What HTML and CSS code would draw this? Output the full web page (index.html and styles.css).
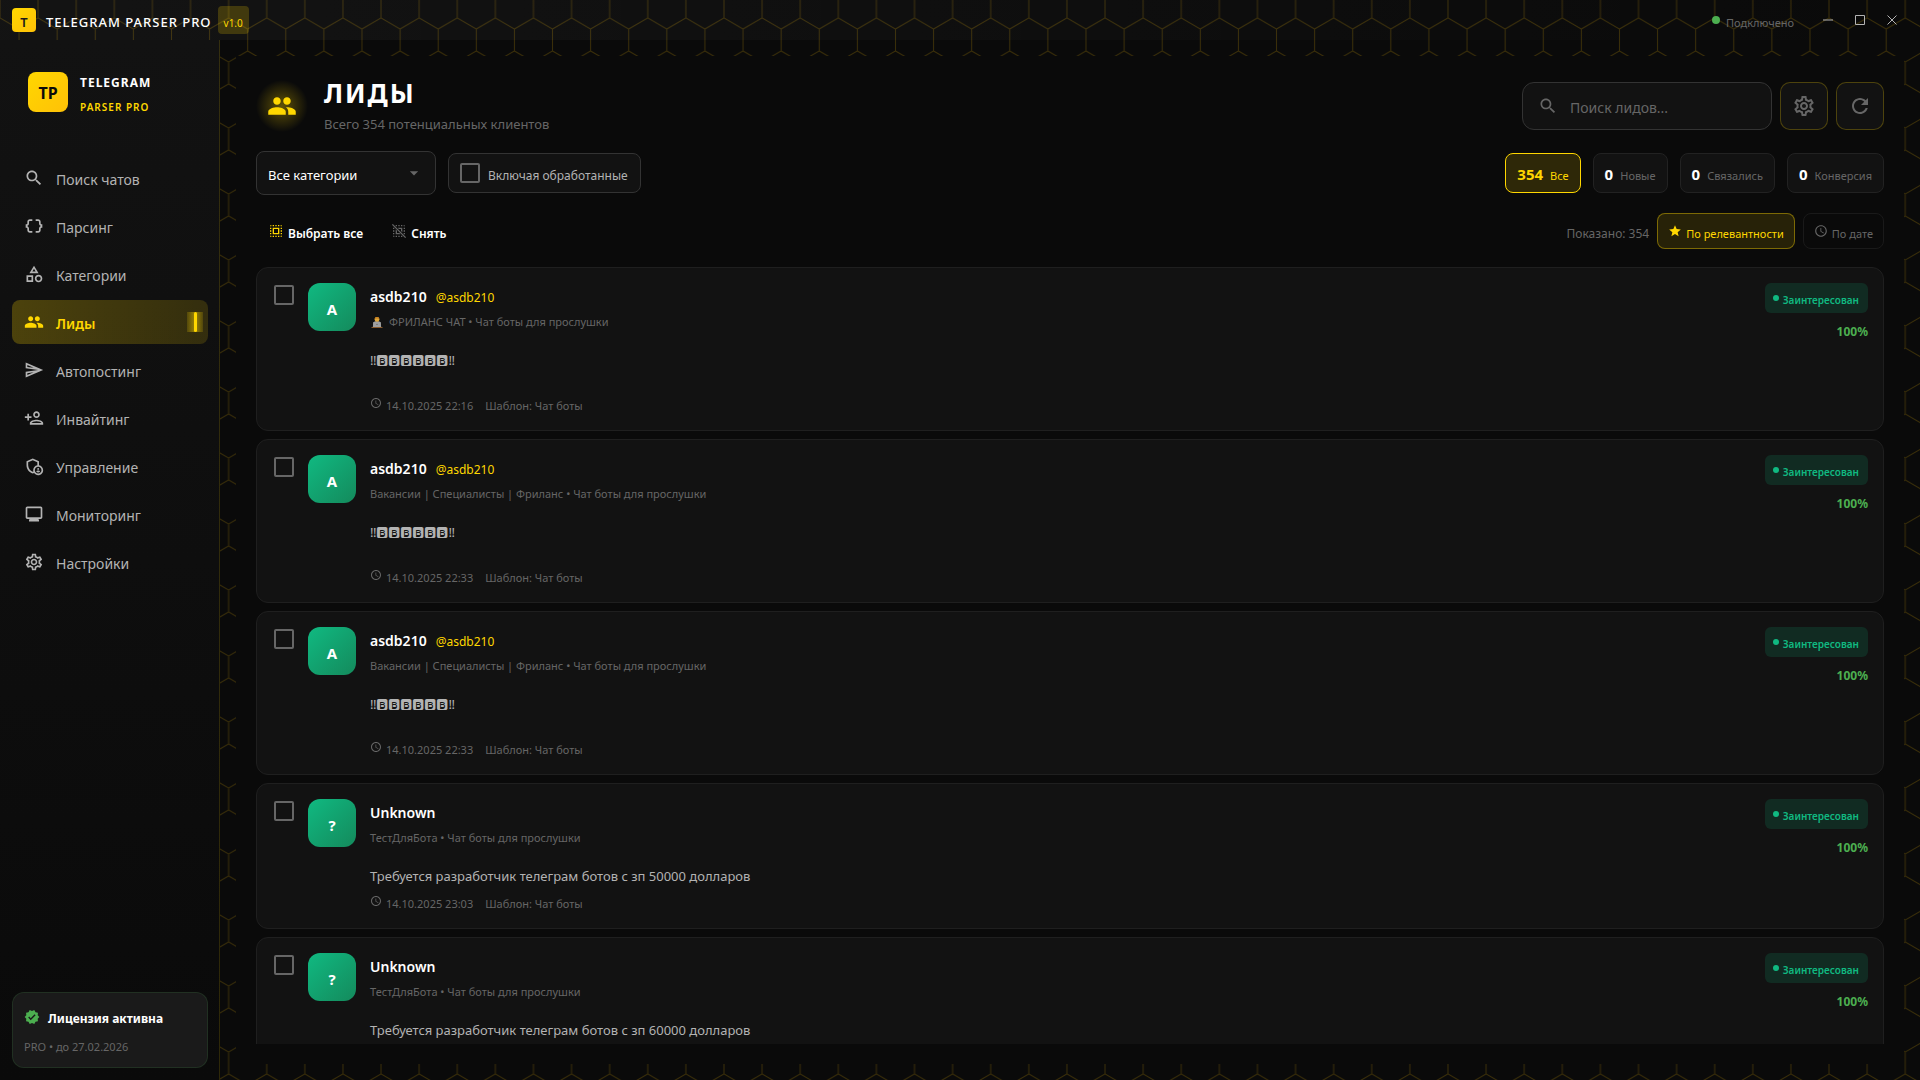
FILE: index.html
```html
<!DOCTYPE html>
<html lang="ru">
<head>
    <meta charset="UTF-8">
    <meta name="viewport" content="width=device-width, initial-scale=1.0">
    <title>Telegram Parser Pro</title>
    <link rel="stylesheet" href="styles.css">
</head>
<body>
    <!-- icons -->
    <svg class="sprite" aria-hidden="true">
        <symbol id="i-search" viewBox="0 0 24 24"><path d="M15.5 14h-.79l-.28-.27C15.41 12.59 16 11.11 16 9.5 16 5.91 13.09 3 9.5 3S3 5.91 3 9.5 5.91 16 9.5 16c1.61 0 3.09-.59 4.23-1.57l.27.28v.79l5 4.99L20.49 19l-4.99-5zm-6 0C7.01 14 5 11.99 5 9.5S7.01 5 9.5 5 14 7.01 14 9.5 11.99 14 9.5 14z"/></symbol>
        <symbol id="i-data" viewBox="0 0 24 24"><path d="M4 7v2c0 .55-.45 1-1 1H2v4h1c.55 0 1 .45 1 1v2c0 1.65 1.35 3 3 3h3v-2H7c-.55 0-1-.45-1-1v-2c0-1.3-.84-2.42-2-2.83v-.34C5.16 11.42 6 10.3 6 9V7c0-.55.45-1 1-1h3V4H7C5.35 4 4 5.35 4 7zM21 10c-.55 0-1-.45-1-1V7c0-1.65-1.35-3-3-3h-3v2h3c.55 0 1 .45 1 1v2c0 1.3.84 2.42 2 2.83v.34c-1.16.41-2 1.52-2 2.83v2c0 .55-.45 1-1 1h-3v2h3c1.65 0 3-1.35 3-3v-2c0-.55.45-1 1-1h1v-4h-1z"/></symbol>
        <symbol id="i-category" viewBox="0 0 24 24"><path d="M12 2l-5.5 9h11L12 2zm0 3.84L13.93 9h-3.87L12 5.84zM17.5 13c-2.49 0-4.5 2.01-4.5 4.5s2.01 4.5 4.5 4.5 4.5-2.01 4.5-4.5-2.01-4.5-4.5-4.5zm0 7c-1.38 0-2.5-1.12-2.5-2.5s1.12-2.5 2.5-2.5 2.5 1.12 2.5 2.5-1.12 2.5-2.5 2.5zM3 21.5h8v-8H3v8zm2-6h4v4H5v-4z"/></symbol>
        <symbol id="i-people" viewBox="0 0 24 24"><path d="M16 11c1.66 0 2.99-1.34 2.99-3S17.66 5 16 5c-1.66 0-3 1.34-3 3s1.34 3 3 3zm-8 0c1.66 0 2.99-1.34 2.99-3S9.66 5 8 5C6.34 5 5 6.34 5 8s1.34 3 3 3zm0 2c-2.33 0-7 1.17-7 3.5V19h14v-2.5c0-2.33-4.67-3.5-7-3.5zm8 0c-.29 0-.62.02-.97.05 1.16.84 1.97 1.97 1.97 3.45V19h6v-2.5c0-2.33-4.67-3.5-7-3.5z"/></symbol>
        <symbol id="i-send" viewBox="0 0 24 24"><path d="M4.01 6.03l7.51 3.22-7.52-1 .01-2.22m7.5 8.72L4 17.97v-2.22l7.51-1M2.01 3L2 10l15 2-15 2 .01 7L23 12 2.01 3z"/></symbol>
        <symbol id="i-invite" viewBox="0 0 24 24"><path d="M15 12c2.21 0 4-1.79 4-4s-1.79-4-4-4-4 1.79-4 4 1.79 4 4 4zm0-6c1.1 0 2 .9 2 2s-.9 2-2 2-2-.9-2-2 .9-2 2-2zm0 8c-2.67 0-8 1.34-8 4v2h16v-2c0-2.66-5.33-4-8-4zm-6 4c.22-.72 3.31-2 6-2 2.7 0 5.8 1.29 6 2H9zm-3-3v-3h3v-2H6V7H4v3H1v2h3v3z"/></symbol>
        <symbol id="i-admin" viewBox="0 0 24 24"><circle cx="17" cy="15.5" r="1.12"/><path d="M17 17.5c-.73 0-2.19.36-2.24 1.08.5.71 1.32 1.17 2.24 1.17s1.74-.46 2.24-1.17c-.05-.72-1.51-1.08-2.24-1.08z"/><path d="M18 11.09V6.27L10.5 3 3 6.27v4.91c0 4.54 3.2 8.79 7.5 9.82.55-.13 1.08-.32 1.6-.55C13.18 21.99 14.97 23 17 23c3.31 0 6-2.69 6-6 0-2.97-2.16-5.43-5-5.91zM11 17c0 .56.08 1.11.23 1.62-.24.11-.48.22-.73.3-3.17-1-5.5-4.24-5.5-7.74v-3.6l5.5-2.4 5.5 2.4v3.51c-2.84.48-5 2.94-5 5.91zm6 4c-2.21 0-4-1.79-4-4s1.79-4 4-4 4 1.79 4 4-1.79 4-4 4z"/></symbol>
        <symbol id="i-monitor" viewBox="0 0 24 24"><path d="M20 3H4c-1.1 0-2 .9-2 2v11c0 1.1.9 2 2 2h3l-1 1v2h12v-2l-1-1h3c1.1 0 2-.9 2-2V5c0-1.1-.9-2-2-2zm0 13H4V5h16v11z"/></symbol>
        <symbol id="i-settings" viewBox="0 0 24 24"><path d="M19.43 12.98c.04-.32.07-.64.07-.98 0-.34-.03-.66-.07-.98l2.11-1.65c.19-.15.24-.42.12-.64l-2-3.46c-.09-.16-.26-.25-.44-.25-.06 0-.12.01-.17.03l-2.49 1c-.52-.4-1.08-.73-1.69-.98l-.38-2.65C14.46 2.18 14.25 2 14 2h-4c-.25 0-.46.18-.49.42l-.38 2.65c-.61.25-1.17.59-1.69.98l-2.49-1c-.06-.02-.12-.03-.18-.03-.17 0-.34.09-.43.25l-2 3.46c-.13.22-.07.49.12.64l2.11 1.65c-.04.32-.07.65-.07.98 0 .33.03.66.07.98l-2.11 1.65c-.19.15-.24.42-.12.64l2 3.46c.09.16.26.25.44.25.06 0 .12-.01.17-.03l2.49-1c.52.4 1.08.73 1.69.98l.38 2.65c.03.24.24.42.49.42h4c.25 0 .46-.18.49-.42l.38-2.65c.61-.25 1.17-.59 1.69-.98l2.49 1c.06.02.12.03.18.03.17 0 .34-.09.43-.25l2-3.46c.12-.22.07-.49-.12-.64l-2.11-1.65zm-1.98-1.71c.04.31.05.52.05.73 0 .21-.02.43-.05.73l-.14 1.13.89.7 1.08.84-.7 1.21-1.27-.51-1.04-.42-.9.68c-.43.32-.84.56-1.25.73l-1.06.43-.16 1.13-.2 1.35h-1.4l-.19-1.35-.16-1.13-1.06-.43c-.43-.18-.83-.41-1.23-.71l-.91-.7-1.06.43-1.27.51-.7-1.21 1.08-.84.89-.7-.14-1.13c-.03-.31-.05-.54-.05-.74s.02-.43.05-.73l.14-1.13-.89-.7-1.08-.84.7-1.21 1.27.51 1.04.42.9-.68c.43-.32.84-.56 1.25-.73l1.06-.43.16-1.13.2-1.35h1.39l.19 1.35.16 1.13 1.06.43c.43.18.83.41 1.23.71l.91.7 1.06-.43 1.27-.51.7 1.21-1.07.85-.89.7.14 1.13zM12 8c-2.21 0-4 1.79-4 4s1.79 4 4 4 4-1.79 4-4-1.79-4-4-4zm0 6c-1.1 0-2-.9-2-2s.9-2 2-2 2 .9 2 2-.9 2-2 2z"/></symbol>
        <symbol id="i-verified" viewBox="0 0 24 24"><path d="M23 12l-2.44-2.79.34-3.69-3.61-.82-1.89-3.2L12 2.96 8.6 1.5 6.71 4.69 3.1 5.5l.34 3.7L1 12l2.44 2.79-.34 3.7 3.61.82L8.6 22.5l3.4-1.47 3.4 1.46 1.89-3.19 3.61-.82-.34-3.69L23 12zm-12.91 4.72l-3.8-3.81 1.48-1.48 2.32 2.33 5.85-5.87 1.48 1.48-7.33 7.35z"/></symbol>
        <symbol id="i-refresh" viewBox="0 0 24 24"><path d="M17.65 6.35C16.2 4.9 14.21 4 12 4c-4.42 0-7.99 3.58-7.99 8s3.57 8 7.99 8c3.73 0 6.84-2.55 7.73-6h-2.08c-.82 2.33-3.04 4-5.65 4-3.31 0-6-2.69-6-6s2.69-6 6-6c1.66 0 3.14.69 4.22 1.78L13 11h7V4l-2.35 2.35z"/></symbol>
        <symbol id="i-select-all" viewBox="0 0 24 24"><path d="M3 5h2V3c-1.1 0-2 .9-2 2zm0 8h2v-2H3v2zm4 8h2v-2H7v2zM3 9h2V7H3v2zm10-6h-2v2h2V3zm6 0v2h2c0-1.1-.9-2-2-2zM5 21v-2H3c0 1.1.9 2 2 2zm-2-4h2v-2H3v2zM9 3H7v2h2V3zm2 18h2v-2h-2v2zm8-8h2v-2h-2v2zm0 8c1.1 0 2-.9 2-2h-2v2zm0-12h2V7h-2v2zm0 8h2v-2h-2v2zm-4 4h2v-2h-2v2zm0-16h2V3h-2v2zM7 17h10V7H7v10zm2-8h6v6H9V9z"/></symbol>
        <symbol id="i-deselect" viewBox="0 0 24 24"><path d="M3 13h2v-2H3v2zm4 8h2v-2H7v2zM3 9h2V7H3v2zm10-6h-2v2h2V3zm6 0v2h2c0-1.1-.9-2-2-2zM5 21v-2H3c0 1.1.9 2 2 2zm-2-4h2v-2H3v2zM9 3H7v2h2V3zm2 18h2v-2h-2v2zm8-8h2v-2h-2v2zm0-4h2V7h-2v2zm0 8h2v-2h-2v2zm-4 4h2v-2h-2v2zm0-16h2V3h-2v2zM10 7h7v7l-2-2V9h-3zM7 9.5l2 2V15h3.5l2 2H7zM1.4 2.8l1.4-1.4 19.8 19.8-1.4 1.4z"/></symbol>
        <symbol id="i-star" viewBox="0 0 24 24"><path d="M12 17.27L18.18 21l-1.64-7.03L22 9.24l-7.19-.61L12 2 9.19 8.63 2 9.24l5.46 4.73L5.82 21z"/></symbol>
        <symbol id="i-clock" viewBox="0 0 24 24"><path d="M11.99 2C6.47 2 2 6.48 2 12s4.47 10 9.99 10C17.52 22 22 17.52 22 12S17.52 2 11.99 2zM12 20c-4.42 0-8-3.58-8-8s3.58-8 8-8 8 3.58 8 8-3.58 8-8 8zm.5-13H11v6l5.25 3.15.75-1.23-4.5-2.67z"/></symbol>
        <symbol id="i-arrow" viewBox="0 0 24 24"><path d="M7 10l5 5 5-5z"/></symbol>
        <symbol id="i-coder" viewBox="0 0 12 12"><path d="M2 9c0-3 1-4 4-4s4 1 4 4z" fill="#888"/><circle cx="6" cy="3.4" r="2.4" fill="#e0a83c"/><path d="M3.6 3.2C3.4.2 8.600.2 8.400 3.200 7 2.200 5 2.200 3.600 3.200z" fill="#c77f1e"/><path d="M2.400 6h7.200l.6 5H1.800z" fill="#a0a0a0"/><circle cx="6" cy="8.400" r=".7" fill="#666"/><path d="M.5 11h11v1H.5z" fill="#8a5a2b"/></symbol>
        <symbol id="i-min" viewBox="0 0 10 10"><path d="M0 4.5h10v1H0z"/></symbol>
        <symbol id="i-max" viewBox="0 0 10 10"><path d="M.5.5h9v9h-9z" fill="none" stroke="currentColor"/></symbol>
        <symbol id="i-close" viewBox="0 0 10 10"><path d="M.5.5l9 9M9.5.5l-9 9" fill="none" stroke="currentColor"/></symbol>
    </svg>

    <!-- honeycomb backdrop -->
    <svg class="honeycomb" aria-hidden="true">
        <defs>
            <pattern id="hex" width="38.105" height="66" patternUnits="userSpaceOnUse" patternTransform="translate(0 -4)">
                <path d="M0 0v22l19.05 11v22L0 66M38.105 0v22L19.05 33M19.05 55l19.05 11" fill="none" stroke="#ffc107" stroke-opacity=".2"/>
            </pattern>
        </defs>
        <rect width="100%" height="100%" fill="url(#hex)"/>
    </svg>

    <div class="app">
        <header class="titlebar">
            <div class="app-icon">T</div>
            <div class="app-title">TELEGRAM PARSER PRO</div>
            <div class="version">v1.0</div>
            <div class="connection"><span class="dot"></span><span class="label">Подключено</span></div>
            <div class="window-controls">
                <button type="button" aria-label="Свернуть"><svg><use href="#i-min"/></svg></button>
                <button type="button" aria-label="Развернуть"><svg><use href="#i-max"/></svg></button>
                <button type="button" aria-label="Закрыть"><svg><use href="#i-close"/></svg></button>
            </div>
        </header>

        <aside class="sidebar">
            <div class="brand">
                <div class="brand-logo">TP</div>
                <div class="brand-text">
                    <div class="brand-name">TELEGRAM</div>
                    <div class="brand-sub">PARSER PRO</div>
                </div>
            </div>
            <nav class="nav">
                <a href="#"><svg class="icon"><use href="#i-search"/></svg><span class="label">Поиск чатов</span></a>
                <a href="#"><svg class="icon"><use href="#i-data"/></svg><span class="label">Парсинг</span></a>
                <a href="#"><svg class="icon"><use href="#i-category"/></svg><span class="label">Категории</span></a>
                <a href="#" class="active"><svg class="icon"><use href="#i-people"/></svg><span class="label">Лиды</span><span class="indicator"></span></a>
                <a href="#"><svg class="icon"><use href="#i-send"/></svg><span class="label">Автопостинг</span></a>
                <a href="#"><svg class="icon"><use href="#i-invite"/></svg><span class="label">Инвайтинг</span></a>
                <a href="#"><svg class="icon"><use href="#i-admin"/></svg><span class="label">Управление</span></a>
                <a href="#"><svg class="icon"><use href="#i-monitor"/></svg><span class="label">Мониторинг</span></a>
                <a href="#"><svg class="icon"><use href="#i-settings"/></svg><span class="label">Настройки</span></a>
            </nav>
            <div class="license">
                <div class="license-title"><svg class="icon"><use href="#i-verified"/></svg><span class="label">Лицензия активна</span></div>
                <div class="license-info">PRO • до 27.02.2026</div>
            </div>
        </aside>

        <main class="main">
            <div class="content">
                <div class="page-header">
                    <div class="page-icon"><svg><use href="#i-people"/></svg></div>
                    <div class="page-heading">
                        <h1>ЛИДЫ</h1>
                        <p>Всего 354 потенциальных клиентов</p>
                    </div>
                    <div class="header-actions">
                        <div class="search">
                            <svg class="icon"><use href="#i-search"/></svg>
                            <input type="text" placeholder="Поиск лидов..." aria-label="Поиск лидов">
                        </div>
                        <button type="button" class="icon-btn" aria-label="Настройки"><svg><use href="#i-settings"/></svg></button>
                        <button type="button" class="icon-btn" aria-label="Обновить"><svg><use href="#i-refresh"/></svg></button>
                    </div>
                </div>

                <div class="filters">
                    <div class="select">
                        <select aria-label="Категория"><option>Все категории</option></select>
                        <svg><use href="#i-arrow"/></svg>
                    </div>
                    <label class="processed"><input type="checkbox"><span class="label">Включая обработанные</span></label>
                    <div class="stats">
                        <button type="button" class="stat active"><b>354</b><span>Все</span></button>
                        <button type="button" class="stat"><b>0</b><span>Новые</span></button>
                        <button type="button" class="stat"><b>0</b><span>Связались</span></button>
                        <button type="button" class="stat"><b>0</b><span>Конверсия</span></button>
                    </div>
                </div>

                <div class="toolbar">
                    <button type="button" class="text-btn gold"><svg><use href="#i-select-all"/></svg><span class="label">Выбрать все</span></button>
                    <button type="button" class="text-btn"><svg><use href="#i-deselect"/></svg><span class="label">Снять</span></button>
                    <div class="sorting">
                        <span class="shown label">Показано: 354</span>
                        <button type="button" class="sort active"><svg><use href="#i-star"/></svg><span class="label">По релевантности</span></button>
                        <button type="button" class="sort"><svg><use href="#i-clock"/></svg><span class="label">По дате</span></button>
                    </div>
                </div>

                <div class="leads">
                    <article class="lead">
                        <input type="checkbox" aria-label="Выбрать лид">
                        <div class="avatar">A</div>
                        <div class="lead-body">
                            <div class="lead-name"><b>asdb210</b><a href="#">@asdb210</a></div>
                            <div class="lead-source"><svg><use href="#i-coder"/></svg>ФРИЛАНС ЧАТ • Чат боты для прослушки</div>
                            <div class="lead-message tall">‼🅱🅱🅱🅱🅱🅱‼</div>
                            <div class="lead-meta"><svg><use href="#i-clock"/></svg><span>14.10.2025 22:16</span><span>Шаблон: Чат боты</span></div>
                        </div>
                        <div class="lead-side">
                            <div class="status"><span class="dot"></span><span class="label">Заинтересован</span></div>
                            <div class="score">100%</div>
                        </div>
                    </article>

                    <article class="lead">
                        <input type="checkbox" aria-label="Выбрать лид">
                        <div class="avatar">A</div>
                        <div class="lead-body">
                            <div class="lead-name"><b>asdb210</b><a href="#">@asdb210</a></div>
                            <div class="lead-source">Вакансии | Специалисты | Фриланс • Чат боты для прослушки</div>
                            <div class="lead-message tall">‼🅱🅱🅱🅱🅱🅱‼</div>
                            <div class="lead-meta"><svg><use href="#i-clock"/></svg><span>14.10.2025 22:33</span><span>Шаблон: Чат боты</span></div>
                        </div>
                        <div class="lead-side">
                            <div class="status"><span class="dot"></span><span class="label">Заинтересован</span></div>
                            <div class="score">100%</div>
                        </div>
                    </article>

                    <article class="lead">
                        <input type="checkbox" aria-label="Выбрать лид">
                        <div class="avatar">A</div>
                        <div class="lead-body">
                            <div class="lead-name"><b>asdb210</b><a href="#">@asdb210</a></div>
                            <div class="lead-source">Вакансии | Специалисты | Фриланс • Чат боты для прослушки</div>
                            <div class="lead-message tall">‼🅱🅱🅱🅱🅱🅱‼</div>
                            <div class="lead-meta"><svg><use href="#i-clock"/></svg><span>14.10.2025 22:33</span><span>Шаблон: Чат боты</span></div>
                        </div>
                        <div class="lead-side">
                            <div class="status"><span class="dot"></span><span class="label">Заинтересован</span></div>
                            <div class="score">100%</div>
                        </div>
                    </article>

                    <article class="lead">
                        <input type="checkbox" aria-label="Выбрать лид">
                        <div class="avatar">?</div>
                        <div class="lead-body">
                            <div class="lead-name"><b>Unknown</b></div>
                            <div class="lead-source">ТестДляБота • Чат боты для прослушки</div>
                            <div class="lead-message">Требуется разработчик телеграм ботов с зп 50000 долларов</div>
                            <div class="lead-meta"><svg><use href="#i-clock"/></svg><span>14.10.2025 23:03</span><span>Шаблон: Чат боты</span></div>
                        </div>
                        <div class="lead-side">
                            <div class="status"><span class="dot"></span><span class="label">Заинтересован</span></div>
                            <div class="score">100%</div>
                        </div>
                    </article>

                    <article class="lead">
                        <input type="checkbox" aria-label="Выбрать лид">
                        <div class="avatar">?</div>
                        <div class="lead-body">
                            <div class="lead-name"><b>Unknown</b></div>
                            <div class="lead-source">ТестДляБота • Чат боты для прослушки</div>
                            <div class="lead-message">Требуется разработчик телеграм ботов с зп 60000 долларов</div>
                        </div>
                        <div class="lead-side">
                            <div class="status"><span class="dot"></span><span class="label">Заинтересован</span></div>
                            <div class="score">100%</div>
                        </div>
                    </article>
                </div>
            </div>
        </main>
    </div>
</body>
</html>
```

FILE: styles.css
```css
* {
    box-sizing: border-box;
}

body {
    margin: 0;
    background: #0a0a0a;
    color: #fff;
    font-family: "Noto Sans", "Open Sans", sans-serif;
    font-size: 14px;
    overflow: hidden;
}

button,
input,
select {
    font-family: inherit;
    color: inherit;
}

button {
    cursor: pointer;
}

a {
    color: inherit;
    text-decoration: none;
}

svg {
    fill: currentColor;
    flex-shrink: 0;
}

.sprite {
    display: none;
}

.honeycomb {
    position: absolute;
    inset: 0;
    width: 100%;
    height: 100%;
}

.app {
    position: relative;
    display: grid;
    grid-template-columns: 220px 1fr;
    grid-template-rows: 40px 1fr;
    height: 100vh;
}

/* captions sit a little below the middle of their row */
.label {
    padding-top: 4px;
}

/* Title bar */
.titlebar {
    grid-column: 1 / 3;
    display: flex;
    align-items: center;
    padding: 0 12px;
    background: linear-gradient(90deg, rgba(255, 255, 255, 0.04), rgba(255, 255, 255, 0));
}

.app-icon {
    width: 24px;
    height: 24px;
    margin-right: 10px;
    border-radius: 4px;
    background: linear-gradient(135deg, #ffd700, #ffc107);
    color: #1a1a1a;
    font-size: 13px;
    font-weight: 600;
    line-height: 28px;
    text-align: center;
}

.app-title {
    padding-top: 4px;
    font-size: 13px;
    font-weight: 500;
    letter-spacing: 1px;
}

.version {
    height: 28px;
    margin-left: 6px;
    padding: 0 6px;
    border-radius: 4px;
    background: rgba(255, 215, 0, 0.2);
    color: #ffd700;
    font-size: 10px;
    line-height: 34px;
}

.connection {
    display: flex;
    align-items: center;
    gap: 6px;
    margin-left: auto;
    color: #666;
    font-size: 11px;
}

.dot {
    width: 8px;
    height: 8px;
    border-radius: 50%;
    background: #4caf50;
}

.window-controls {
    display: flex;
    margin-left: 18px;
}

.window-controls button {
    width: 32px;
    height: 32px;
    padding: 0;
    border: none;
    background: none;
    color: #b3b3b3;
}

.window-controls svg {
    width: 10px;
    height: 10px;
}

/* Sidebar */
.sidebar {
    display: flex;
    flex-direction: column;
    padding: 32px 11px 12px 12px;
    border-right: 1px solid rgba(255, 215, 0, 0.15);
    background: linear-gradient(180deg, #121212, #0a0a0a);
}

.brand {
    display: flex;
    gap: 12px;
    padding: 0 16px;
}

.brand-logo {
    width: 40px;
    height: 40px;
    border-radius: 8px;
    background: linear-gradient(135deg, #ffd700, #ffc107);
    color: #0a0a0a;
    font-size: 16px;
    font-weight: bold;
    line-height: 42px;
    text-align: center;
}

.brand-name {
    font-size: 12px;
    font-weight: bold;
    line-height: 22px;
    letter-spacing: 1px;
}

.brand-sub {
    color: #ffd700;
    font-size: 10px;
    font-weight: 600;
    line-height: 26px;
    letter-spacing: 1px;
}

.nav {
    display: flex;
    flex-direction: column;
    gap: 4px;
    margin-top: 36px;
}

.nav a {
    display: flex;
    align-items: center;
    height: 44px;
    padding: 0 5px 0 12px;
    border-radius: 8px;
    color: #b3b3b3;
}

.nav .label {
    padding-top: 2px;
}

.nav .icon {
    width: 20px;
    height: 20px;
    margin-right: 12px;
}

.nav a.active {
    background: linear-gradient(90deg, rgba(255, 215, 0, 0.25), rgba(255, 215, 0, 0.15));
    color: #ffd700;
    font-weight: 600;
}

.indicator {
    display: flex;
    justify-content: center;
    width: 16px;
    height: 20px;
    margin-left: auto;
    background: linear-gradient(90deg, rgba(255, 215, 0, 0.15), rgba(255, 215, 0, 0.5), rgba(255, 215, 0, 0.15));
}

.indicator::before {
    content: "";
    width: 3px;
    border-radius: 2px;
    background: #ffd700;
}

.license {
    height: 76px;
    margin-top: auto;
    padding: 13px 11px;
    border: 1px solid rgba(76, 175, 80, 0.15);
    border-radius: 12px;
    background: #1a1a1a;
}

.license-title {
    display: flex;
    align-items: center;
    gap: 8px;
    font-size: 12px;
    font-weight: bold;
    line-height: 18px;
}

.license-title .icon {
    width: 16px;
    height: 16px;
    color: #4caf50;
}

.license-info {
    padding-top: 10px;
    color: #666;
    font-size: 11px;
    line-height: 18px;
}

/* Content */
.main {
    min-height: 0;
    padding: 16px;
}

.content {
    display: flex;
    flex-direction: column;
    height: 100%;
    padding: 20px;
    background: #0a0a0a;
}

.page-header {
    display: flex;
    align-items: center;
    height: 60px;
}

.page-icon {
    display: flex;
    align-items: center;
    justify-content: center;
    width: 52px;
    height: 52px;
    border-radius: 50%;
    background: radial-gradient(circle closest-side, rgba(255, 215, 0, 0.35), rgba(255, 215, 0, 0));
    color: #ffd700;
}

.page-icon svg {
    width: 30px;
    height: 30px;
}

.page-heading {
    margin-left: 16px;
}

h1 {
    margin: 0;
    font-size: 26px;
    line-height: 36px;
    letter-spacing: 2px;
}

.page-heading p {
    margin: 0;
    color: #666;
    font-size: 13px;
    line-height: 26px;
}

.header-actions {
    display: flex;
    gap: 8px;
    margin-left: auto;
}

.search {
    display: flex;
    align-items: center;
    width: 250px;
    height: 48px;
    padding: 0 15px;
    border: 1px solid #333;
    border-radius: 12px;
    background: #121212;
    color: #666;
}

.search .icon {
    width: 20px;
    height: 20px;
    margin-right: 12px;
}

.search input {
    flex: 1;
    min-width: 0;
    padding: 2px 0 0;
    border: none;
    outline: none;
    background: none;
    font-size: 14px;
}

.search input::placeholder {
    color: #666;
}

.icon-btn {
    display: flex;
    align-items: center;
    justify-content: center;
    width: 48px;
    height: 48px;
    padding: 0;
    border: 1px solid rgba(255, 215, 0, 0.25);
    border-radius: 10px;
    background: #121212;
    color: #666;
}

.icon-btn svg {
    width: 24px;
    height: 24px;
}

.filters {
    display: flex;
    align-items: center;
    gap: 12px;
    height: 44px;
    margin-top: 15px;
}

.select {
    position: relative;
    width: 180px;
    height: 44px;
}

.select select {
    width: 100%;
    height: 100%;
    padding: 4px 11px 0;
    appearance: none;
    border: 1px solid #333;
    border-radius: 8px;
    background: #121212;
    font-size: 13px;
}

.select svg {
    position: absolute;
    top: 12px;
    right: 12px;
    width: 20px;
    height: 20px;
    color: #666;
    pointer-events: none;
}

input[type="checkbox"] {
    flex-shrink: 0;
    width: 20px;
    height: 20px;
    margin: 0;
    appearance: none;
    border: 2px solid #666;
    border-radius: 2px;
}

.processed {
    display: flex;
    align-items: center;
    gap: 8px;
    height: 40px;
    padding: 0 12px 0 11px;
    border: 1px solid #333;
    border-radius: 8px;
    background: #121212;
    color: #b3b3b3;
    font-size: 12px;
}

.stats {
    display: flex;
    gap: 12px;
    margin-left: auto;
}

.stat {
    display: flex;
    align-items: baseline;
    gap: 7px;
    height: 40px;
    padding: 4px 11px 0;
    border: 1px solid #222;
    border-radius: 8px;
    background: #121212;
    color: #666;
    font-size: 11px;
    line-height: 32px;
}

.stat b {
    color: #fff;
    font-size: 15px;
}

.stat.active {
    border-color: #ffd700;
    background: rgba(255, 215, 0, 0.15);
}

.stat.active,
.stat.active b {
    color: #ffd700;
}

.toolbar {
    display: flex;
    align-items: center;
    gap: 4px;
    height: 36px;
    margin: 18px 0;
}

.text-btn {
    display: flex;
    align-items: center;
    gap: 4px;
    padding: 0 12px;
    border: none;
    background: none;
    font-size: 12px;
    font-weight: 600;
}

.text-btn svg {
    width: 16px;
    height: 16px;
    color: #666;
}

.text-btn.gold svg {
    color: #ffd700;
}

.sorting {
    display: flex;
    align-items: center;
    gap: 8px;
    margin-left: auto;
}

.shown {
    color: #666;
    font-size: 12px;
}

.sort {
    display: flex;
    align-items: center;
    gap: 4px;
    height: 36px;
    padding: 0 10px;
    border: 1px solid #1a1a1a;
    border-radius: 8px;
    background: none;
    color: #666;
    font-size: 11px;
}

.sort svg {
    width: 14px;
    height: 14px;
}

.sort.active {
    border-color: rgba(255, 215, 0, 0.4);
    background: rgba(255, 215, 0, 0.12);
    color: #ffd700;
}

/* Leads */
.leads {
    flex: 1;
    display: flex;
    flex-direction: column;
    gap: 8px;
    min-height: 0;
    overflow: hidden;
}

.lead {
    display: flex;
    flex-shrink: 0;
    align-items: flex-start;
    padding: 15px;
    border: 1px solid #1f1f1f;
    border-radius: 12px;
    background: #121212;
}

.lead input {
    margin: 2px 14px 0 2px;
}

.avatar {
    width: 48px;
    height: 48px;
    margin-right: 14px;
    border-radius: 12px;
    background: linear-gradient(135deg, #10b981, #148a5c);
    font-size: 15px;
    font-weight: bold;
    line-height: 52px;
    text-align: center;
}

.lead-body {
    flex: 1;
    min-width: 0;
}

.lead-name {
    display: flex;
    align-items: baseline;
    gap: 9px;
    height: 28px;
    font-size: 12px;
    line-height: 28px;
}

.lead-name b {
    font-size: 14px;
    font-weight: 600;
}

.lead-name a {
    color: #ffd700;
}

.lead-source {
    display: flex;
    align-items: center;
    gap: 5px;
    color: #666;
    font-size: 11px;
    line-height: 22px;
}

.lead-source svg {
    width: 14px;
    height: 12px;
}

.lead-message {
    margin-top: 14px;
    color: #b3b3b3;
    font-size: 13px;
    line-height: 26px;
}

.lead-message.tall {
    height: 44px;
}

.lead-meta {
    display: flex;
    align-items: center;
    gap: 4px;
    color: #666;
    font-size: 11px;
    line-height: 18px;
}

.lead-meta svg {
    width: 12px;
    height: 12px;
}

.lead-meta span {
    padding-top: 6px;
}

.lead-meta span + span {
    margin-left: 8px;
}

.lead-side {
    display: flex;
    flex-direction: column;
    align-items: flex-end;
}

.status {
    display: flex;
    align-items: center;
    gap: 4px;
    height: 30px;
    padding: 0 9px 0 8px;
    border-radius: 6px;
    background: rgba(16, 185, 129, 0.15);
    color: #10b981;
    font-size: 10px;
    font-weight: 600;
}

.status .dot {
    width: 6px;
    height: 6px;
    background: #10b981;
}

.score {
    color: #4caf50;
    font-size: 12px;
    font-weight: bold;
    line-height: 38px;
}
```
